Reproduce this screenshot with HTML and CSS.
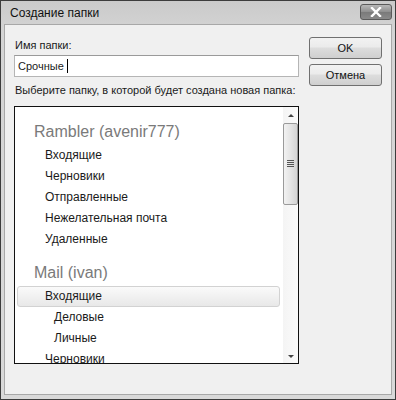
FILE: index.html
```html
<!DOCTYPE html>
<html lang="ru">
<head>
    <meta charset="UTF-8">
    <title>Создание папки</title>
    <link rel="stylesheet" href="styles.css">
</head>
<body>
    <div class="window">
        <div class="titlebar">
            <span class="title">Создание папки</span>
            <button class="close-btn" aria-label="Закрыть">
                <svg width="12" height="10" viewBox="0 0 12 10">
                    <path d="M2 1 L10 9 M10 1 L2 9" stroke="#fff" stroke-width="2.4" stroke-linecap="square"/>
                </svg>
            </button>
        </div>
        <div class="client">
            <div class="form">
                <label class="field-label" for="folderName">Имя папки:</label>
                <div class="text-input" id="folderName">Срочные <span class="caret"></span></div>
                <div class="field-label second">Выберите папку, в которой будет создана новая папка:</div>
                <div class="tree">
                    <div class="tree-list">
                        <div class="account">Rambler (avenir777)</div>
                        <div class="folder">Входящие</div>
                        <div class="folder">Черновики</div>
                        <div class="folder">Отправленные</div>
                        <div class="folder">Нежелательная почта</div>
                        <div class="folder">Удаленные</div>
                        <div class="account gap">Mail (ivan)</div>
                        <div class="folder selected">Входящие</div>
                        <div class="folder sub">Деловые</div>
                        <div class="folder sub">Личные</div>
                        <div class="folder">Черновики</div>
                    </div>
                    <div class="scrollbar">
                        <div class="arrow up"></div>
                        <div class="thumb">
                            <div class="grip"></div>
                        </div>
                        <div class="track"></div>
                        <div class="arrow down"></div>
                    </div>
                </div>
            </div>
            <div class="buttons">
                <button class="btn">OK</button>
                <button class="btn">Отмена</button>
            </div>
        </div>
    </div>
</body>
</html>
```

FILE: styles.css
```css
* {
    box-sizing: border-box;
    margin: 0;
    padding: 0;
}

body {
    font-family: 'Liberation Sans', Arial, sans-serif;
    font-size: 11px;
    color: #1a1a1a;
    background: #ffffff;
}

.window {
    width: 396px;
    height: 400px;
    border: 1px solid #3c3c3c;
    background: linear-gradient(to bottom, #cacaca, #d4d4d4 30px, #d9d9d9);
    padding: 0 3px 4px;
    display: flex;
    flex-direction: column;
}

.titlebar {
    height: 23px;
    display: flex;
    align-items: center;
    justify-content: space-between;
    padding: 0 0 0 6px;
}

.title {
    font-size: 12px;
    color: #111;
    padding-top: 1px;
}

.close-btn {
    width: 32px;
    height: 16px;
    margin-top: -2px;
    border: 1px solid #5a5a5a;
    border-radius: 3px;
    background: linear-gradient(to bottom, #b8b8b8, #8e8e8e 50%, #7a7a7a 51%, #8a8a8a);
    display: flex;
    align-items: center;
    justify-content: center;
}

.client {
    flex: 1;
    background: #f0f0f0;
    border: 1px solid #a8a8a8;
    display: flex;
    padding: 12px 9px 0 9px;
}

.form {
    width: 286px;
    display: flex;
    flex-direction: column;
}

.field-label {
    line-height: 16px;
    padding-left: 1px;
    white-space: nowrap;
}

.field-label.second {
    margin-top: 5px;
}

.text-input {
    margin-top: 2px;
    height: 22px;
    border: 1px solid #b5b5b5;
    border-top-color: #9a9a9a;
    background: #fff;
    padding: 2px 3px;
    line-height: 16px;
    display: flex;
    align-items: center;
}

.caret {
    display: inline-block;
    width: 1px;
    height: 14px;
    background: #000;
    margin-left: 3px;
}

.tree {
    margin-top: 8px;
    width: 285px;
    height: 258px;
    border: 1px solid #111;
    background: #fff;
    display: flex;
    overflow: hidden;
    font-size: 12px;
}

.tree-list {
    flex: 1;
    padding: 15px 0 0 2px;
    overflow: hidden;
}

.account {
    font-size: 16px;
    color: #7a7a7a;
    line-height: 20px;
    padding-left: 17px;
    margin-bottom: 3px;
}

.account.gap {
    margin-top: 13px;
}

.folder {
    height: 21px;
    line-height: 21px;
    padding-left: 28px;
    color: #1a1a1a;
}

.folder.sub {
    padding-left: 37px;
}

.folder.selected {
    border: 1px solid #d2d2d2;
    border-radius: 3px;
    background: linear-gradient(to bottom, #fafafa, #e8e8e8);
    line-height: 19px;
    padding-left: 27px;
    margin-right: 3px;
}

.scrollbar {
    width: 15px;
    background: linear-gradient(to right, #f4f4f4, #fbfbfb);
    display: flex;
    flex-direction: column;
    align-items: center;
}

.arrow {
    width: 0;
    height: 0;
    border-left: 3px solid transparent;
    border-right: 3px solid transparent;
    margin: 7px 0 6px;
}

.arrow.up {
    border-bottom: 3px solid #444;
}

.arrow.down {
    border-top: 3px solid #444;
    margin: 5px 0 5px;
}

.thumb {
    width: 15px;
    height: 82px;
    border: 1px solid #9a9a9a;
    border-radius: 2px;
    background: linear-gradient(to right, #f2f2f2, #e4e4e4 50%, #d4d4d4);
    display: flex;
    align-items: center;
    justify-content: center;
}

.grip {
    width: 7px;
    height: 8px;
    background: repeating-linear-gradient(to bottom, #555 0, #555 1px, transparent 1px, transparent 2px);
}

.track {
    flex: 1;
}

.buttons {
    margin-left: 10px;
    display: flex;
    flex-direction: column;
    gap: 5px;
}

.btn {
    width: 73px;
    height: 22px;
    font-family: inherit;
    font-size: 11px;
    color: #111;
    border: 1px solid #707070;
    border-radius: 3px;
    background: linear-gradient(to bottom, #f2f2f2, #ebebeb 45%, #dddddd 50%, #cfcfcf);
}
```
